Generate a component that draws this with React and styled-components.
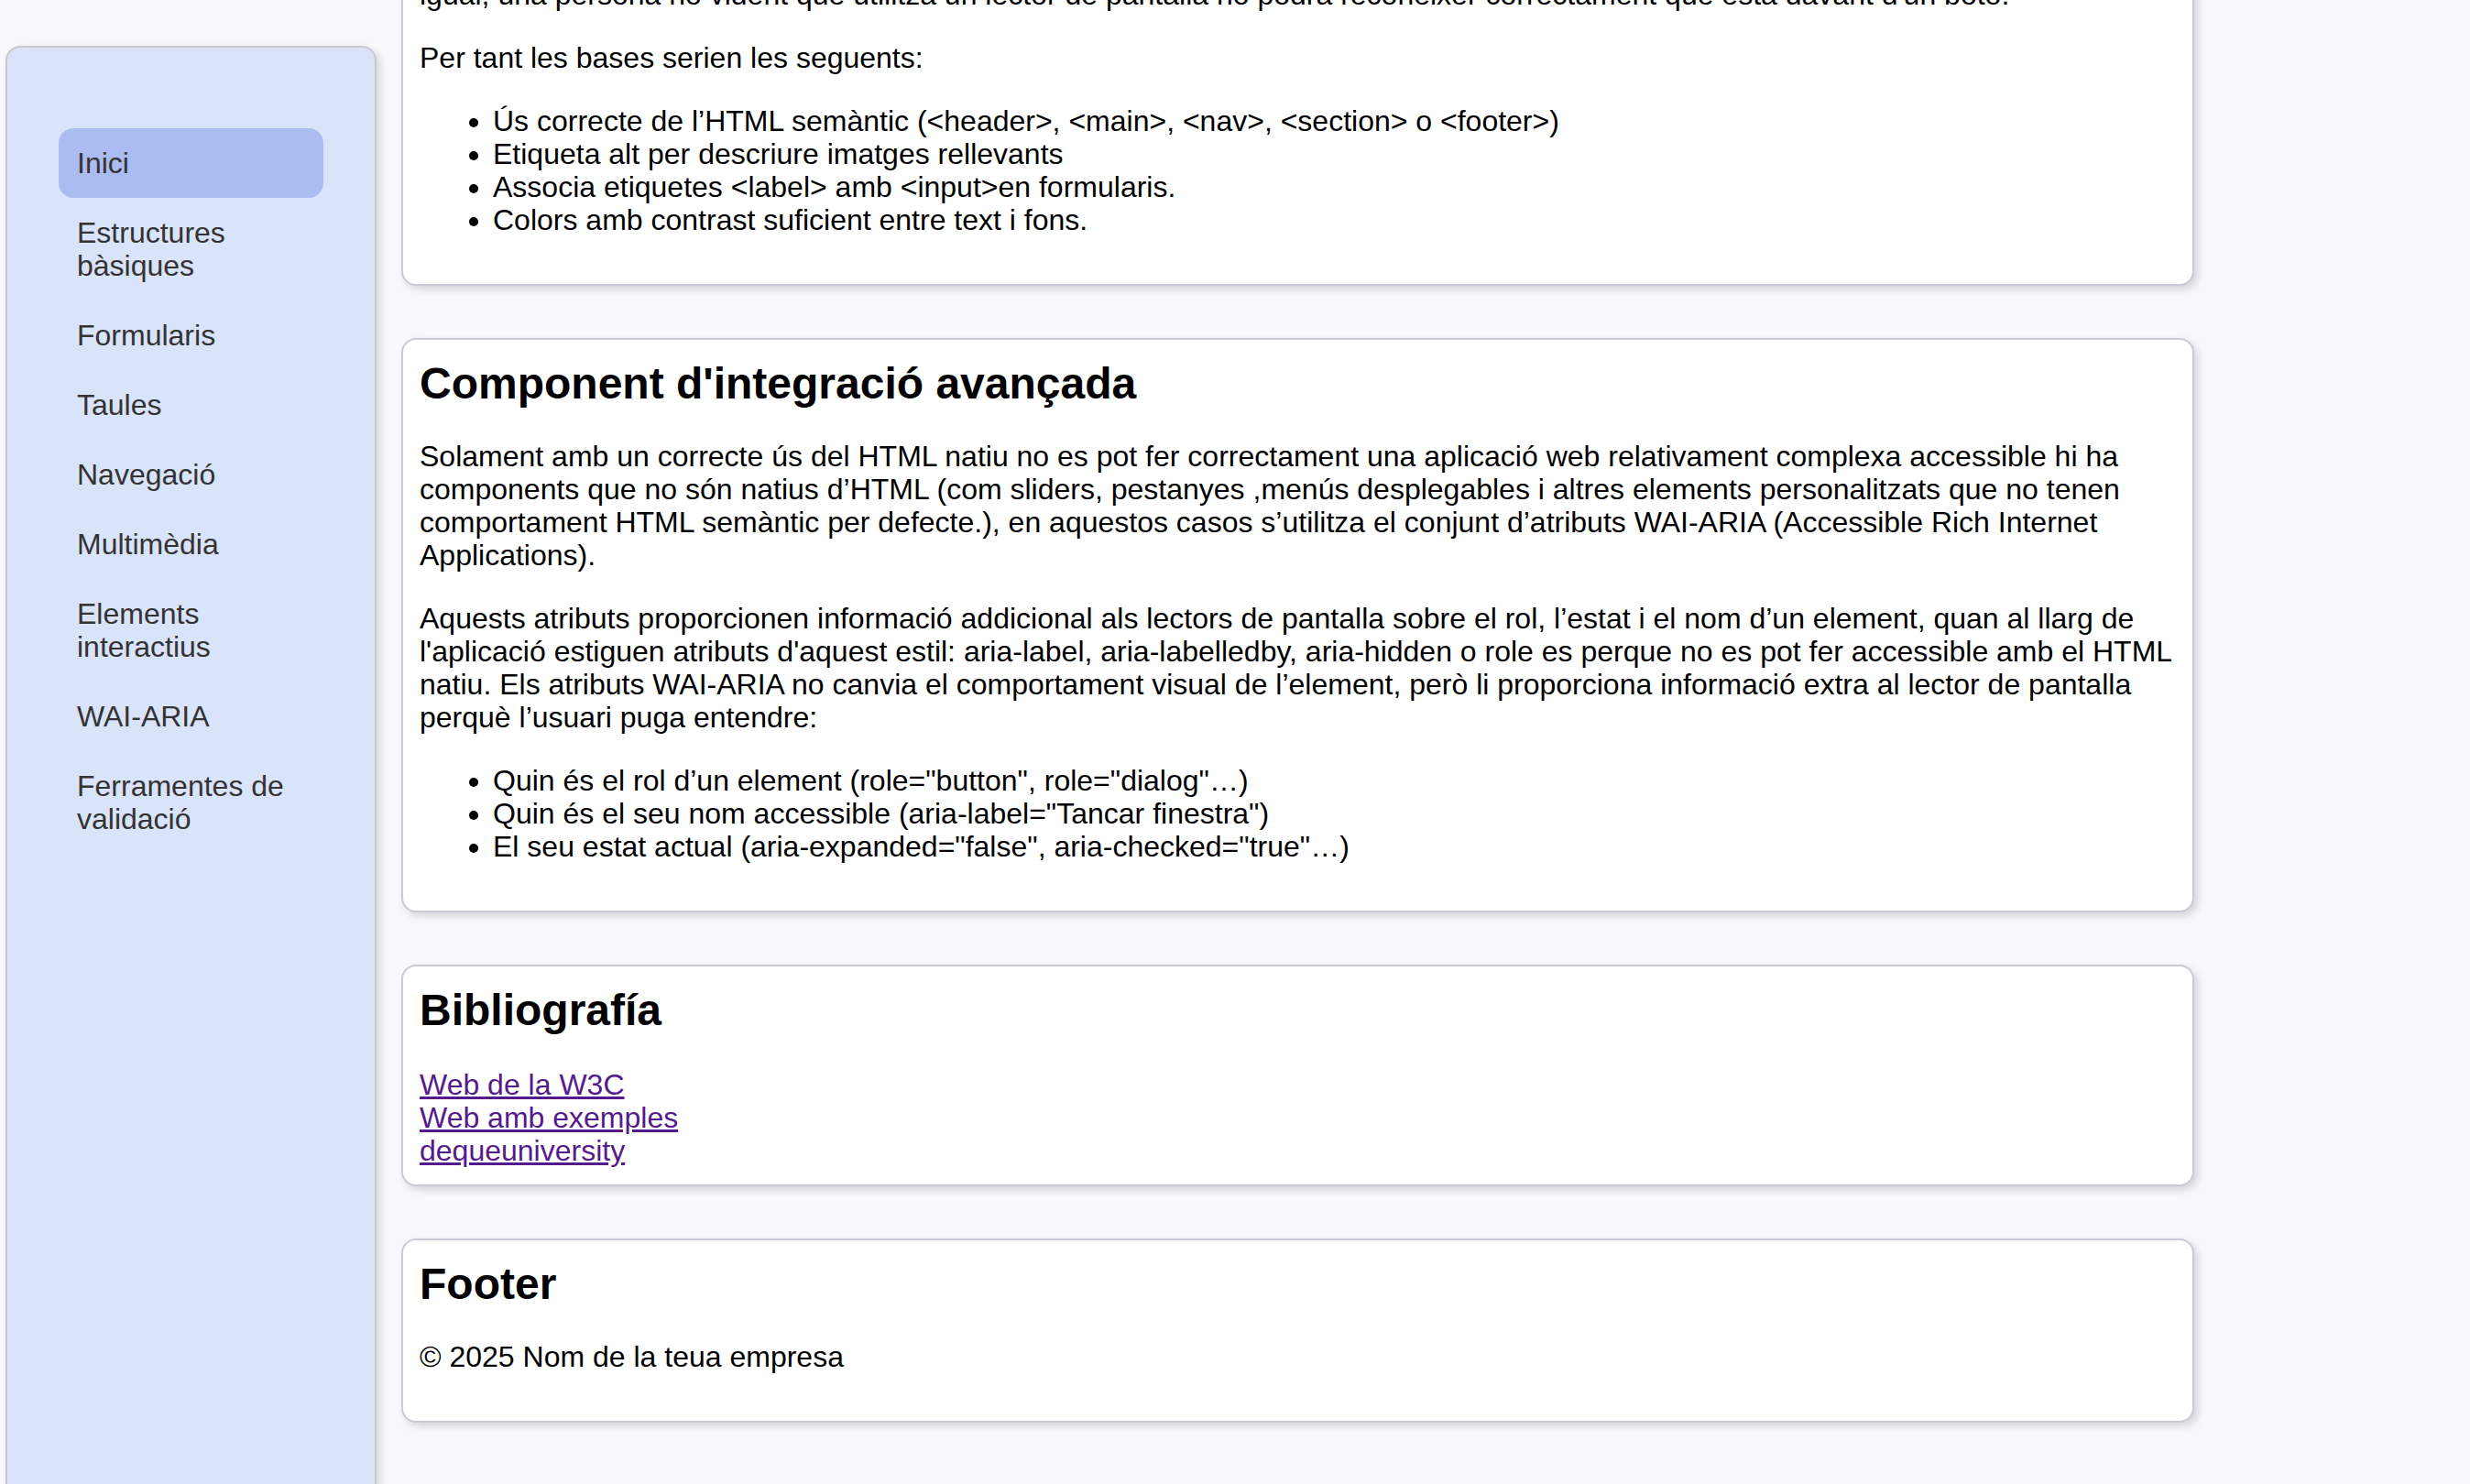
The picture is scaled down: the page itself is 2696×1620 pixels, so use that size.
import styled, { createGlobalStyle } from 'styled-components';

const GlobalStyle = createGlobalStyle`
  html {
    overflow: hidden;
  }
  body {
    margin: 0;
    background: #f8f8fd;
    font-family: "Liberation Sans", Arial, Helvetica, sans-serif;
    color: #000;
  }
`

const Layout = styled.div`
  display: flex;
  align-items: flex-start;
  gap: 27px;
  padding-left: 6px;
`

const Sidebar = styled.nav`
  flex: 0 0 405px;
  box-sizing: border-box;
  height: 1640px;
  margin-top: 50px;
  padding: 88px 56px 0;
  background: #d9e3fa;
  border: 2px solid #c9c9cc;
  border-radius: 16px;
  box-shadow: 4px 4px 10px rgba(0, 0, 0, 0.14);

  ul {
    list-style: none;
    margin: 0;
    padding: 0;
  }
`

const NavItem = styled.li`
  a {
    display: block;
    padding: 20px 20px;
    border-radius: 16px;
    font-size: 32px;
    line-height: 36px;
    color: #333;
    text-decoration: none;
    background: ${({ $active }) => ($active ? '#abbcf0' : 'transparent')};
  }
`

const Main = styled.main`
  flex: 0 0 1957px;
  display: flex;
  flex-direction: column;
  gap: 57px;
  margin-top: -46px;
`

const Card = styled.section`
  box-sizing: border-box;
  padding: 20px 18px 19px;
  background: #fff;
  border: 2px solid #c9cad3;
  border-radius: 16px;
  box-shadow: 4px 4px 10px rgba(0, 0, 0, 0.15);
  font-size: 32px;
  line-height: 36px;

  > :first-child {
    margin-top: 0;
  }

  h2 {
    margin: 0;
    font-size: 48px;
    line-height: 56px;
    font-weight: bold;
  }

  p, ul {
    margin: 33px 0;
  }

  ul {
    padding-left: 80px;
  }
`

const LinkList = styled.div`
  margin-top: 35px;

  a {
    display: block;
    width: fit-content;
    color: #551a8b;
    text-decoration: underline;
  }
`

const navItems = [
  'Inici',
  'Estructures bàsiques',
  'Formularis',
  'Taules',
  'Navegació',
  'Multimèdia',
  'Elements interactius',
  'WAI-ARIA',
  'Ferramentes de validació',
]

export default function App() {
  return (
    <>
      <GlobalStyle />
      <Layout>
        <Sidebar>
          <ul>
            {navItems.map((item, i) => (
              <NavItem key={item} $active={i === 0}>
                <a href="#">{item}</a>
              </NavItem>
            ))}
          </ul>
        </Sidebar>

        <Main>
          <Card>
            <p>igual, una persona no vident que utilitza un lector de pantalla no podrà reconèixer correctament que està davant d'un botó.</p>
            <p>Per tant les bases serien les seguents:</p>
            <ul>
              <li>Ús correcte de l’HTML semàntic (&lt;header&gt;, &lt;main&gt;, &lt;nav&gt;, &lt;section&gt; o &lt;footer&gt;)</li>
              <li>Etiqueta alt per descriure imatges rellevants</li>
              <li>Associa etiquetes &lt;label&gt; amb &lt;input&gt;en formularis.</li>
              <li>Colors amb contrast suficient entre text i fons.</li>
            </ul>
          </Card>

          <Card>
            <h2>Component d'integració avançada</h2>
            <p>
              Solament amb un correcte ús del HTML natiu no es pot fer correctament una aplicació web relativament complexa accessible hi ha components que no són natius d’HTML (com sliders, pestanyes ,menús desplegables i altres elements personalitzats que no tenen comportament HTML semàntic per defecte.), en aquestos casos s’utilitza el conjunt d’atributs WAI-ARIA (Accessible Rich Internet Applications).
            </p>
            <p>
              Aquests atributs proporcionen informació addicional als lectors de pantalla sobre el rol, l’estat i el nom d’un element, quan al llarg de l'aplicació estiguen atributs d'aquest estil: aria-label, aria-labelledby, aria-hidden o role es perque no es pot fer accessible amb el HTML natiu. Els atributs WAI-ARIA no canvia el comportament visual de l’element, però li proporciona informació extra al lector de pantalla perquè l’usuari puga entendre:
            </p>
            <ul>
              <li>Quin és el rol d’un element (role="button", role="dialog"…)</li>
              <li>Quin és el seu nom accessible (aria-label="Tancar finestra")</li>
              <li>El seu estat actual (aria-expanded="false", aria-checked="true"…)</li>
            </ul>
          </Card>

          <Card>
            <h2>Bibliografía</h2>
            <LinkList>
              <a href="#">Web de la W3C</a>
              <a href="#">Web amb exemples</a>
              <a href="#">dequeuniversity</a>
            </LinkList>
          </Card>

          <Card as="footer">
            <h2>Footer</h2>
            <p>© 2025 Nom de la teua empresa</p>
          </Card>
        </Main>
      </Layout>
    </>
  )
}
